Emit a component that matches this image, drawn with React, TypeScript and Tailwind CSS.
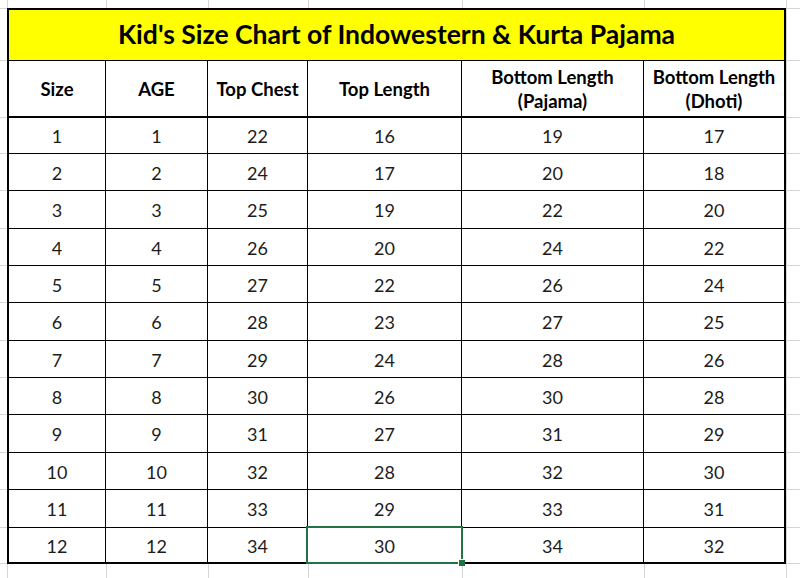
const columns = [
  { label: ["Size"], width: "w-[97px]" },
  { label: ["AGE"], width: "w-[102px]" },
  { label: ["Top Chest"], width: "w-[100px]" },
  { label: ["Top Length"], width: "w-[154px]" },
  { label: ["Bottom Length", "(Pajama)"], width: "w-[182px]" },
  { label: ["Bottom Length", "(Dhoti)"], width: "flex-1" },
];

const rows = [
  { h: "h-[36px]", v: [1, 1, 22, 16, 19, 17] },
  { h: "h-[37px]", v: [2, 2, 24, 17, 20, 18] },
  { h: "h-[38px]", v: [3, 3, 25, 19, 22, 20] },
  { h: "h-[37px]", v: [4, 4, 26, 20, 24, 22] },
  { h: "h-[37px]", v: [5, 5, 27, 22, 26, 24] },
  { h: "h-[38px]", v: [6, 6, 28, 23, 27, 25] },
  { h: "h-[37px]", v: [7, 7, 29, 24, 28, 26] },
  { h: "h-[37px]", v: [8, 8, 30, 26, 30, 28] },
  { h: "h-[38px]", v: [9, 9, 31, 27, 31, 29] },
  { h: "h-[37px]", v: [10, 10, 32, 28, 32, 30] },
  { h: "h-[38px]", v: [11, 11, 33, 29, 33, 31] },
  { h: "h-[34px]", v: [12, 12, 34, 30, 34, 32] },
];

// light sheet gridlines left/right of the table
const sideHeights = [
  "h-[9px]", "h-[52px]", "h-[57px]",
  "h-[36px]", "h-[37px]", "h-[38px]", "h-[37px]", "h-[37px]", "h-[38px]",
  "h-[37px]", "h-[37px]", "h-[38px]", "h-[37px]", "h-[38px]", "h-[36px]",
];

const stripWidths = ["w-[99px]", "w-[102px]", "w-[100px]", "w-[154px]", "w-[182px]"];

const SideStrip = ({ className }: { className: string }) => (
  <div className={`flex flex-col ${className}`}>
    {sideHeights.map((h, i) => (
      <div key={i} className={`${h} border-b border-[#d6d6d6]`} />
    ))}
    <div className="flex-1" />
  </div>
);

const GapStrip = ({ className }: { className: string }) => (
  <div className={`flex border-l border-[#d6d6d6] ${className}`}>
    {stripWidths.map((w, i) => (
      <div key={i} className={`${w} border-r border-[#d6d6d6]`} />
    ))}
    <div className="flex-1" />
  </div>
);

const App = () => {
  return (
    <div className="w-[800px] h-[578px] bg-white flex overflow-hidden font-['Lato',sans-serif] text-black">
      <SideStrip className="w-[7px]" />

      <div className="w-[779px] flex flex-col">
        <GapStrip className="h-[8px]" />

        <div className="h-[556px] border-2 border-black flex flex-col">
          <div className="h-[51px] border-b border-black bg-[#ffff00] flex items-center justify-center text-[26.5px] font-bold">
            Kid's Size Chart of Indowestern &amp; Kurta Pajama
          </div>

          <div className="h-[57px] border-b-2 border-black flex">
            {columns.map((c, i) => (
              <div
                key={i}
                className={`${c.width} ${i < 5 ? "border-r border-black" : ""} flex flex-col items-center justify-center text-[18.5px] font-bold leading-[24px]`}
              >
                {c.label.map((l) => (
                  <span key={l}>{l}</span>
                ))}
              </div>
            ))}
          </div>

          {rows.map((r, ri) => (
            <div key={ri} className={`${r.h} flex ${ri < 11 ? "border-b border-black" : ""}`}>
              {r.v.map((v, ci) => (
                <div
                  key={ci}
                  className={`${columns[ci].width} ${ci < 5 ? "border-r border-black" : ""} relative flex items-center justify-center pt-[2px] text-[18px] text-[#1c1c1c]`}
                >
                  {v}
                  {ri === 11 && ci === 3 && (
                    <div className="absolute -top-[2px] -left-[2px] -right-[2px] -bottom-[2px] border-2 border-[#217346] z-10">
                      <div className="absolute -right-[4px] -bottom-[4px] w-[7px] h-[7px] bg-[#217346] border-l border-t border-white" />
                    </div>
                  )}
                </div>
              ))}
            </div>
          ))}
        </div>

        <GapStrip className="flex-1" />
      </div>

      <SideStrip className="flex-1 border-l border-[#d6d6d6]" />
    </div>
  );
};

export default App;
